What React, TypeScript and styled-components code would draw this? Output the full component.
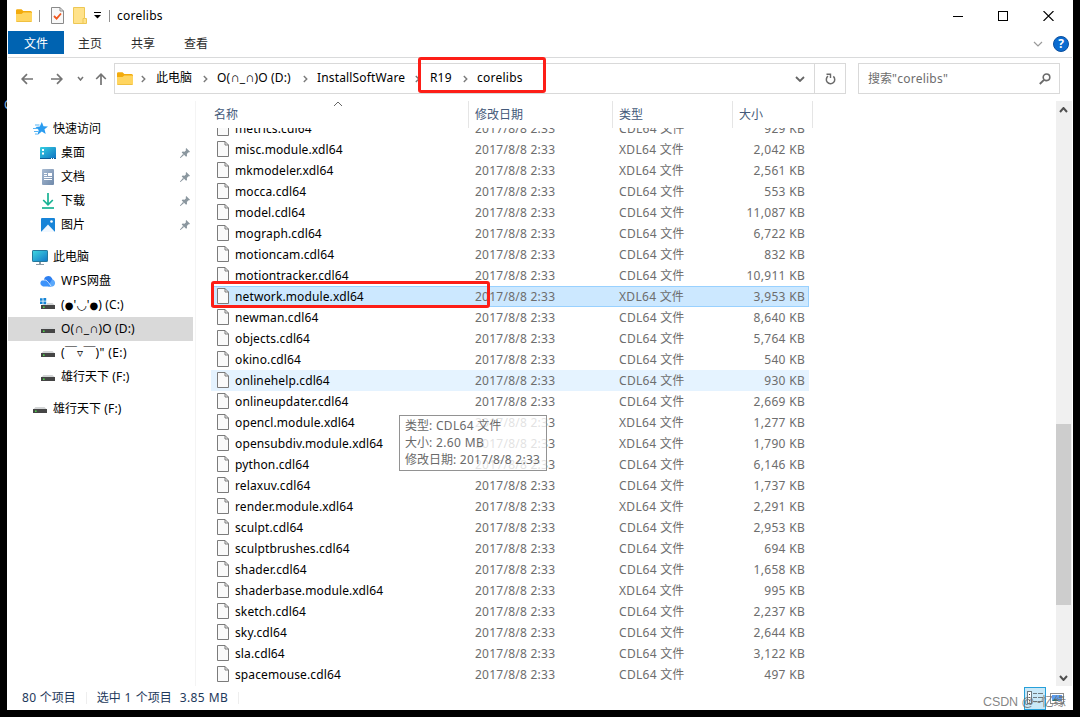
import React from "react";
import styled, { createGlobalStyle } from "styled-components";

const Global = createGlobalStyle`
  * { box-sizing: border-box; }
  html, body { margin: 0; padding: 0; background: #000; overflow: hidden; }
  body { font-family: "Noto Sans", "Noto Sans CJK SC", "DejaVu Sans", sans-serif; font-size: 12px; color: #000; }
  svg { display: block; flex: none; }
`;

/* ---------- text ---------- */
const Run = styled.span<{ $ls: number }>`
  letter-spacing: ${(p) => p.$ls}px;
`;
const Dot = styled.span`
  font-family: "DejaVu Sans", sans-serif;
  font-size: 10px;
  line-height: 1;
`;
const Cap = styled.span`
  font-family: "Liberation Sans", "DejaVu Sans", sans-serif;
  font-size: 13px;
  line-height: 1;
`;
const Line = styled.span`
  white-space: pre;
  line-height: 20px;
`;
const CJK = /([\u3400-\u9fff\uff00-\uffef]+|●|∩)/;

function Label({ text, ls = 0.15 }: { text: string; ls?: number }) {
  return (
    <Line>
      {text.split(CJK).filter(Boolean).map((part, i) => {
        if (part === "●") return <Dot key={i}>{part}</Dot>;
        if (part === "∩") return <Cap key={i}>{part}</Cap>;
        return <Run key={i} $ls={CJK.test(part) ? 0 : ls}>{part}</Run>;
      })}
    </Line>
  );
}

/* ---------- frame ---------- */
const Desktop = styled.div`
  position: relative;
  width: 1080px;
  height: 717px;
  padding: 0 7px 7px;
  background: #000;
  overflow: hidden;
`;
const Window = styled.div`
  display: flex;
  flex-direction: column;
  width: 1066px;
  height: 710px;
  padding: 0 1px;
  background: #fff;
`;
const DesktopGlyph = styled.div`
  position: absolute;
  left: 4px;
  top: 96px;
  width: 3px;
  height: 18px;
  line-height: 18px;
  font-size: 12px;
  overflow: hidden;
  color: #7fb2e0;
`;

/* ---------- title bar ---------- */
const TitleBar = styled.div`
  display: flex;
  align-items: center;
  height: 31px;
  padding-left: 8px;
`;
const Rule = styled.div<{ $l: number; $r: number }>`
  width: 1px;
  height: 12px;
  margin: 0 ${(p) => p.$r}px 0 ${(p) => p.$l}px;
  background: #909090;
`;
const QuickIcons = styled.div`
  display: flex;
  align-items: center;
  gap: 9px;
`;
const WindowButtons = styled.div`
  display: flex;
  gap: 35px;
  margin-left: auto;
  padding-right: 18px;
`;

/* ---------- tabs ---------- */
const Tabs = styled.div`
  display: flex;
  height: 27px;
  padding-bottom: 3px;
  border-bottom: 1px solid #d9dadb;
`;
const Tab = styled.div<{ $active?: boolean; $w: number }>`
  display: flex;
  align-items: center;
  justify-content: center;
  width: ${(p) => p.$w}px;
  height: 23px;
  padding-top: 2px;
  color: ${(p) => (p.$active ? "#fff" : "#2b2b2b")};
  background: ${(p) => (p.$active ? "#0063b1" : "transparent")};
`;
const TabTools = styled.div`
  display: flex;
  align-items: center;
  gap: 10px;
  height: 26px;
  margin-left: auto;
  padding-right: 3px;
`;
const Help = styled.div`
  width: 16px;
  height: 16px;
  border: 1px solid #0b4f9e;
  border-radius: 50%;
  background: #0a6bd0;
  color: #fff;
  font-weight: 700;
  font-size: 12px;
  line-height: 14px;
  text-align: center;
`;

/* ---------- address ---------- */
const AddressRow = styled.div`
  display: flex;
  height: 43px;
  padding: 5px 0 7px;
`;
const NavButtons = styled.div`
  display: flex;
  align-items: center;
  width: 106px;
  padding-left: 13px;
`;
const Gap = styled.div<{ $w: number }>`
  width: ${(p) => p.$w}px;
  flex: none;
`;
const AddressBox = styled.div`
  display: flex;
  align-items: center;
  width: 732px;
  height: 31px;
  border: 1px solid #d9d9d9;
  padding-left: 2px;
`;
const Crumb = styled.div<{ $w: number }>`
  width: ${(p) => p.$w}px;
  display: flex;
  padding-bottom: 2px;
`;
const AddressTail = styled.div`
  display: flex;
  align-items: center;
  height: 100%;
  margin-left: auto;
`;
const Refresh = styled.div`
  display: flex;
  align-items: center;
  justify-content: center;
  width: 31px;
  height: 100%;
  margin-left: 9px;
  border-left: 1px solid #d9d9d9;
`;
const SearchBox = styled.div`
  display: flex;
  align-items: center;
  justify-content: space-between;
  width: 202px;
  height: 31px;
  margin-left: 12px;
  padding: 0 8px 0 9px;
  border: 1px solid #d9d9d9;
  color: #6d6d6d;
`;

/* ---------- body ---------- */
const Body = styled.div`
  display: flex;
  height: 585px;
`;
const Sidebar = styled.div`
  width: 188px;
  padding-top: 16px;
  border-right: 1px solid #f4f4f4;
`;
const SideRow = styled.div<{ $indent: number; $selected?: boolean; $gap?: boolean }>`
  display: flex;
  align-items: center;
  gap: 5px;
  width: 185px;
  height: 24px;
  margin-top: ${(p) => (p.$gap ? 8 : 0)}px;
  padding-left: ${(p) => p.$indent}px;
  padding-right: 3px;
  background: ${(p) => (p.$selected ? "#d9d9d9" : "transparent")};
`;
const PinSlot = styled.div`
  margin-left: auto;
`;
const Pane = styled.div`
  position: relative;
  display: flex;
  flex-direction: column;
  flex: 1;
  padding-left: 15px;
`;
const Header = styled.div`
  display: flex;
  height: 27px;
  color: #44597a;
`;
const HeadCell = styled.div<{ $w: number; $pad: number }>`
  display: flex;
  align-items: flex-start;
  width: ${(p) => p.$w}px;
  padding: 4px 0 0 ${(p) => p.$pad}px;
  border-right: 1px solid #e5e5e5;
`;
const SortMark = styled.div`
  position: absolute;
  left: 137px;
  top: 0;
`;
const List = styled.div`
  display: flex;
  flex-direction: column;
  justify-content: flex-end;
  width: 598px;
  height: 557px;
  overflow: hidden;
`;
const FileRow = styled.div<{ $state?: "selected" | "hover" }>`
  display: flex;
  align-items: center;
  flex: none;
  height: 21px;
  padding: 0 4px 0 6px;
  background: ${(p) => (p.$state === "selected" ? "#cce8ff" : p.$state === "hover" ? "#e5f3ff" : "transparent")};
  box-shadow: ${(p) => (p.$state === "selected" ? "inset 0 0 0 1px #99d1ff" : "none")};
`;
const NameCell = styled.div`
  display: flex;
  align-items: center;
  gap: 6px;
  width: 258px;
  & > svg { margin-bottom: 1px; }
`;
const MetaCell = styled.div<{ $w: number; $right?: boolean }>`
  width: ${(p) => p.$w}px;
  color: #6d6d6d;
  text-align: ${(p) => (p.$right ? "right" : "left")};
  line-height: 20px;
`;
const Scrollbar = styled.div`
  display: flex;
  flex-direction: column;
  align-items: center;
  width: 16px;
  padding: 6px 1px 5px 0;
  background: #f0f0f0;
`;
const Thumb = styled.div`
  width: 15px;
  height: 181px;
  margin: 311px 0 auto;
  background: #cdcdcd;
`;

/* ---------- status ---------- */
const Status = styled.div`
  display: flex;
  align-items: center;
  height: 24px;
  padding-left: 14px;
  color: #1e395b;
`;
const StatusRule = styled.div<{ $l: number; $r: number }>`
  width: 1px;
  height: 12px;
  margin: 0 ${(p) => p.$r}px 0 ${(p) => p.$l}px;
  background: #eee;
`;
const Views = styled.div`
  display: flex;
  align-items: center;
  gap: 4px;
  margin-left: auto;
  padding-right: 8px;
`;
const ViewActive = styled.div`
  display: flex;
  align-items: center;
  justify-content: center;
  width: 22px;
  height: 23px;
  border: 1px solid #26a0da;
  background: #c9e8f7;
`;

/* ---------- overlays ---------- */
const RedMark = styled.div<{ $x: number; $y: number; $w: number; $h: number }>`
  position: absolute;
  left: ${(p) => p.$x}px;
  top: ${(p) => p.$y}px;
  width: ${(p) => p.$w}px;
  height: ${(p) => p.$h}px;
  border: 3px solid #fd1e17;
  border-radius: 3px;
`;
const Tooltip = styled.div`
  position: absolute;
  left: 399px;
  top: 415px;
  width: 148px;
  height: 56px;
  padding: 1px 0 0 5px;
  display: flex;
  flex-direction: column;
  border: 1px solid #929292;
  background: rgba(255, 255, 255, 0.8);
  color: #6a6a6a;
`;
const TipLine = styled.div`
  height: 17px;
  display: flex;
  align-items: center;
`;
const Watermark = styled.div`
  position: absolute;
  left: 983px;
  top: 692px;
  color: rgba(110, 110, 110, 0.85);
  font-family: "Liberation Sans", "Noto Sans CJK SC", sans-serif;
  font-size: 12.5px;
  letter-spacing: -0.1px;
  line-height: 20px;
  white-space: pre;
`;

/* ---------- icons ---------- */
const Folder = () => (
  <svg width="16" height="14" viewBox="0 0 16 14">
    <path d="M0 1.500Q0 .2 1.300.2h4.200L7.300 2h7.200q1.500 0 1.500 1.500V6H0z" fill="#f3ab0c" />
    <path d="M0 5h5.500L7.300 3.500H15q1 0 1 1v7.300q0 1.200-1.200 1.200H1.200Q0 13 0 11.800z" fill="#ffd560" />
    <path d="M0.500 12.500h15" stroke="#f0c040" strokeWidth="1" />
  </svg>
);
const CheckDoc = () => (
  <svg width="13" height="17" viewBox="0 0 13 17">
    <path d="M.5.500h8.500l3.500 3.500v12.500H.5z" fill="#f8f8f8" stroke="#8a8a8a" />
    <path d="M9 .5v3.500h3.500" fill="none" stroke="#8a8a8a" />
    <path d="M3 9l2.600 2.600L10 6.500" fill="none" stroke="#f0561d" strokeWidth="1.800" />
  </svg>
);
const NewFolder = () => (
  <svg width="14" height="17" viewBox="0 0 14 17">
    <path d="M.5.500h11v11h2v5H.5z" fill="#ffe28a" stroke="#edc754" />
    <path d="M11.500 11.500h-1.500v5" fill="none" stroke="#edc754" />
  </svg>
);
const QuickMenu = () => (
  <svg width="7" height="7" viewBox="0 0 7 7">
    <path d="M0 .5h7" stroke="#000" />
    <path d="M0 3h7L3.500 6.500z" fill="#000" />
  </svg>
);
const Min = () => (
  <svg width="10" height="10"><path d="M0 5.500h10" stroke="#000" /></svg>
);
const Max = () => (
  <svg width="10" height="10"><rect x=".5" y=".5" width="9" height="9" fill="none" stroke="#000" /></svg>
);
const Close = () => (
  <svg width="11" height="10"><path d="M.5 0l10 10M10.500 0l-10 10" stroke="#000" strokeWidth="1.100" /></svg>
);
type ChevronProps = { w: number; h: number; color: string; sw?: number; up?: boolean };
const Chevron = ({ w, h, color, sw = 1.500, up }: ChevronProps) => (
  <svg width={w + 2} height={h + 2} viewBox={`-1 -1 ${w + 2} ${h + 2}`}>
    <path d={up ? `M0 ${h}L${w / 2} 0L${w} ${h}` : `M0 0L${w / 2} ${h}L${w} 0`} fill="none" stroke={color} strokeWidth={sw} />
  </svg>
);
const CrumbArrow = () => (
  <svg width="5" height="8" viewBox="0 0 5 8"><path d="M.8 1l3 3-3 3" fill="none" stroke="#7a7a7a" strokeWidth="1.400" /></svg>
);
const Arrow = ({ turn, color = "#747474" }: { turn: number; color?: string }) => (
  <svg width="12" height="12" viewBox="0 0 12 12">
    <g transform={`rotate(${turn} 6 6)`} fill="none" stroke={color} strokeWidth="1.700">
      <path d="M1 6h11M6 1.200L1.200 6 6 10.800" />
    </g>
  </svg>
);
const RefreshIcon = () => (
  <svg width="11" height="12" viewBox="0 0 11 12">
    <path d="M3 3.200A4.200 4.200 0 1 0 8.300 3.400" fill="none" stroke="#6a6a6a" strokeWidth="1.500" />
    <path d="M1.500 1.200H5.500V5" fill="none" stroke="#6a6a6a" strokeWidth="1.400" />
  </svg>
);
const SearchIcon = () => (
  <svg width="12" height="12" viewBox="0 0 12 12" fill="none" stroke="#6a6a6a">
    <circle cx="7.500" cy="4.300" r="3.300" strokeWidth="1.600" />
    <path d="M5 6.800L.8 11" strokeWidth="1.900" />
  </svg>
);
const Star = () => (
  <svg width="15" height="14" viewBox="0 0 15 14">
    <path d="M8.800 0l1.700 4.200 4.500.2-3.500 2.900 1.200 4.700-3.900-2.400L4.500 13l1.200-5L2.500 5l4.300-.6z" fill="#2a9cf0" />
    <path d="M2 3h4.500M0 6.500h4M1 9.500h4M2 12h2.500" stroke="#55b4f5" strokeWidth="1" />
  </svg>
);
const DesktopIcon = () => (
  <svg width="16" height="12" viewBox="0 0 16 12">
    <defs><linearGradient id="dk" x1="0" y1="0" x2="1" y2="1"><stop offset="0" stopColor="#35d0e2" /><stop offset="1" stopColor="#0f70c0" /></linearGradient></defs>
    <rect width="16" height="12" rx="1" fill="url(#dk)" />
    <path d="M2 2h2v2H2zM2 5.500h2v2H2z" fill="#fff" />
    <path d="M0 11.500h16" stroke="#0c5a94" strokeWidth="1" />
    <path d="M11 11.500h1M13 11.500h1" stroke="#fff" />
  </svg>
);
const DocIcon = () => (
  <svg width="12" height="16" viewBox="0 0 12 16">
    <defs><linearGradient id="dc" x1="0" y1="0" x2="1" y2="1"><stop offset="0" stopColor="#a9bbd2" /><stop offset="1" stopColor="#6f89aa" /></linearGradient></defs>
    <rect width="12" height="16" rx="1" fill="url(#dc)" />
    <path d="M2 4.500h3M2 6.500h3M2 8.500h8M2 10.500h8" stroke="#fff" />
    <rect x="6" y="4" width="4" height="3" fill="#fff" />
  </svg>
);
const DownloadIcon = () => (
  <svg width="12" height="16" viewBox="0 0 12 16" fill="none" stroke="#18b293">
    <path d="M6 0v12M1.200 7L6 11.800 10.800 7" strokeWidth="1.700" />
    <path d="M0 15h12" strokeWidth="1.700" />
  </svg>
);
const PictureIcon = () => (
  <svg width="14" height="14" viewBox="0 0 14 14">
    <rect width="14" height="14" rx="1" fill="#1784d8" />
    <path d="M0 14L7 6.500l7 7.500z" fill="#f1f8ff" />
    <circle cx="10.500" cy="3.500" r="1.300" fill="#fff" />
  </svg>
);
const PcIcon = () => (
  <svg width="16" height="15" viewBox="0 0 16 15">
    <defs><linearGradient id="pc" x1="0" y1="0" x2="1" y2="1"><stop offset="0" stopColor="#3fd8e0" /><stop offset="1" stopColor="#1276c8" /></linearGradient></defs>
    <rect x=".5" y=".5" width="15" height="11" rx=".6" fill="url(#pc)" stroke="#26789c" />
    <path d="M7 12h2v2H7z" fill="#8a9aa6" /><path d="M4 14.500h8" stroke="#8a9aa6" />
  </svg>
);
const CloudIcon = () => (
  <svg width="16" height="12" viewBox="0 0 16 12">
    <path d="M4 5.500a4.300 4.300 0 0 1 8-2.300L13.500 7 9 11z" fill="#2d7ff0" />
    <path d="M12 4.500a3.600 3.600 0 0 1 .5 7H8z" fill="#5aa8fb" />
    <path d="M3 5.200q3-.8 5 2l3.500 4.300H3a3.200 3.200 0 0 1 0-6.300z" fill="#3d93fa" />
    <path d="M2.500 5q4-1 6 2.500l2.500 3.500" stroke="#e5f1ff" fill="none" strokeWidth=".8" />
  </svg>
);
const DriveIcon = ({ system }: { system?: boolean }) => (
  <svg width="16" height="14" viewBox="0 0 16 14">
    <path d="M3.500 5h9L15 7.500H1z" fill="#d3d5d6" />
    <rect x="1" y="7" width="14" height="4" fill="#454545" />
    <rect x="3" y="8.500" width="1.600" height="1.400" fill="#4ee04a" />
    {system && (
      <>
        <path d="M0 0h7v6.500H0z" fill="#fff" />
        <path d="M0 .3h2.600v2.400H0zM3.400 0h2.800v2.700H3.400zM0 3.500h2.600V6H0zM3.400 3.500h2.800v2.800H3.400z" fill="#1685d6" />
      </>
    )}
  </svg>
);
const Pin = () => (
  <svg width="10" height="10" viewBox="0 0 10 10">
    <path d="M6.200 0L10 3.800l-1 .6-.6-.1-1.500 1.600.1 2-.9.900L1.700 4.400l.9-.8 2 .1L6 2.200 5.700 1zM3 6l1 1-3.500 3H0v-.5z" fill="#8b979f" />
  </svg>
);
const FileIcon = () => (
  <svg width="12" height="16" viewBox="0 0 12 16">
    <path d="M.5.500h7.500l3.500 3.500v11.500H.5z" fill="#fafafa" stroke="#7b7b7b" />
    <path d="M8 .5V4h3.500" fill="none" stroke="#7b7b7b" />
  </svg>
);
const DetailsIcon = () => (
  <svg width="16" height="14" viewBox="0 0 16 14" fill="none" stroke="#6f7a80">
    <rect x=".5" y=".5" width="4" height="12" fill="#fff" />
    <path d="M2 3.500h1M2 6.500h1M2 9.500h1" stroke="#444" />
    <path d="M6 2.500h4M11 2.500h5M6 6.500h4M11 6.500h5M6 10.500h4M11 10.500h5" />
  </svg>
);
const LargeIcon = () => (
  <svg width="14" height="11" viewBox="0 0 14 11">
    <rect x=".5" y=".5" width="13" height="10" fill="#fff" stroke="#8c8c8c" />
    <rect x="2" y="2" width="10" height="6" fill="#5b9df0" />
    <path d="M2 8l3-2.500L9 8z" fill="#2c6e5f" />
  </svg>
);

/* ---------- data ---------- */
type Side = { label: string; icon: React.ReactNode; indent: number; ls?: number; pinned?: boolean; selected?: boolean; gap?: boolean };
const side: Side[] = [
  { label: "快速访问", icon: <Star />, indent: 24 },
  { label: "桌面", icon: <DesktopIcon />, indent: 32, pinned: true },
  { label: "文档", icon: <DocIcon />, indent: 32, pinned: true },
  { label: "下载", icon: <DownloadIcon />, indent: 32, pinned: true },
  { label: "图片", icon: <PictureIcon />, indent: 32, pinned: true },
  { label: "此电脑", icon: <PcIcon />, indent: 24, gap: true },
  { label: "WPS网盘", icon: <CloudIcon />, indent: 32, ls: 0.3 },
  { label: "(●'◡'●) (C:)", icon: <DriveIcon system />, indent: 32, ls: 0.1 },
  { label: "O(∩_∩)O (D:)", icon: <DriveIcon />, indent: 32, ls: 0.15, selected: true },
  { label: "(￣▿￣)\" (E:)", icon: <DriveIcon />, indent: 32, ls: 0.4 },
  { label: "雄行天下 (F:)", icon: <DriveIcon />, indent: 32 },
  { label: "雄行天下 (F:)", icon: <DriveIcon />, indent: 24, gap: true },
];
const IconSlot = styled.div`
  display: flex;
  justify-content: center;
  width: 16px;
`;

const files: [string, string][] = [
  ["metrics.cdl64", "929"],
  ["misc.module.xdl64", "2,042"],
  ["mkmodeler.xdl64", "2,561"],
  ["mocca.cdl64", "553"],
  ["model.cdl64", "11,087"],
  ["mograph.cdl64", "6,722"],
  ["motioncam.cdl64", "832"],
  ["motiontracker.cdl64", "10,911"],
  ["network.module.xdl64", "3,953"],
  ["newman.cdl64", "8,640"],
  ["objects.cdl64", "5,764"],
  ["okino.cdl64", "540"],
  ["onlinehelp.cdl64", "930"],
  ["onlineupdater.cdl64", "2,669"],
  ["opencl.module.xdl64", "1,277"],
  ["opensubdiv.module.xdl64", "1,790"],
  ["python.cdl64", "6,146"],
  ["relaxuv.cdl64", "1,737"],
  ["render.module.xdl64", "2,291"],
  ["sculpt.cdl64", "2,953"],
  ["sculptbrushes.cdl64", "694"],
  ["shader.cdl64", "1,658"],
  ["shaderbase.module.xdl64", "995"],
  ["sketch.cdl64", "2,237"],
  ["sky.cdl64", "2,644"],
  ["sla.cdl64", "3,122"],
  ["spacemouse.cdl64", "497"],
];
const rowState = (name: string) =>
  name.startsWith("network") ? "selected" : name.startsWith("onlinehelp") ? "hover" : undefined;

export default function App() {
  return (
    <Desktop>
      <Global />
      <DesktopGlyph>C</DesktopGlyph>
      <Window>
        <TitleBar>
          <Folder />
          <Rule $l={7} $r={11} />
          <QuickIcons><CheckDoc /><NewFolder /></QuickIcons>
          <Gap $w={7} />
          <QuickMenu />
          <Rule $l={8} $r={7} />
          <Label text="corelibs" ls={0.25} />
          <WindowButtons><Min /><Max /><Close /></WindowButtons>
        </TitleBar>
        <Tabs>
          <Tab $active $w={56}><Label text="文件" /></Tab>
          <Tab $w={52}><Label text="主页" /></Tab>
          <Tab $w={54}><Label text="共享" /></Tab>
          <Tab $w={52}><Label text="查看" /></Tab>
          <TabTools>
            <Chevron w={8} h={4} color="#9a9a9a" sw={1.200} />
            <Help>?</Help>
          </TabTools>
        </Tabs>
        <AddressRow>
          <NavButtons>
            <Arrow turn={0} /><Gap $w={18} />
            <Arrow turn={180} /><Gap $w={14} />
            <Chevron w={5} h={3} color="#747474" /><Gap $w={11} />
            <Arrow turn={90} />
          </NavButtons>
          <AddressBox>
            <Folder /><Gap $w={8} /><CrumbArrow /><Gap $w={10} />
            <Crumb $w={47}><Label text="此电脑" /></Crumb><CrumbArrow /><Gap $w={9} />
            <Crumb $w={86}><Label text="O(∩_∩)O (D:)" ls={0.15} /></Crumb><CrumbArrow /><Gap $w={9} />
            <Crumb $w={98}><Label text="InstallSoftWare" ls={0.15} /></Crumb><CrumbArrow /><Gap $w={10} />
            <Crumb $w={33}><Label text="R19" /></Crumb><CrumbArrow /><Gap $w={9} />
            <Crumb $w={60}><Label text="corelibs" ls={0.25} /></Crumb>
            <AddressTail>
              <Chevron w={8} h={4} color="#666" sw={1.800} />
              <Refresh><RefreshIcon /></Refresh>
            </AddressTail>
          </AddressBox>
          <SearchBox><Label text={'搜索"corelibs"'} ls={0.25} /><SearchIcon /></SearchBox>
        </AddressRow>
        <Body>
          <Sidebar>
            {side.map((s, i) => (
              <SideRow key={i} $indent={s.indent} $selected={s.selected} $gap={s.gap}>
                <IconSlot>{s.icon}</IconSlot>
                <Label text={s.label} ls={s.ls} />
                {s.pinned && <PinSlot><Pin /></PinSlot>}
              </SideRow>
            ))}
          </Sidebar>
          <Pane>
            <SortMark><Chevron w={8} h={4} color="#666" sw={1} up /></SortMark>
            <Header>
              <HeadCell $w={258} $pad={3}><Label text="名称" /></HeadCell>
              <HeadCell $w={144} $pad={6}><Label text="修改日期" /></HeadCell>
              <HeadCell $w={120} $pad={6}><Label text="类型" /></HeadCell>
              <HeadCell $w={80} $pad={6}><Label text="大小" /></HeadCell>
            </Header>
            <List>
              {files.map(([name, size]) => (
                <FileRow key={name} $state={rowState(name)}>
                  <NameCell><FileIcon /><Label text={name} ls={0.12} /></NameCell>
                  <MetaCell $w={144}><Label text="2017/8/8 2:33" ls={0.25} /></MetaCell>
                  <MetaCell $w={100}><Label text={`${name.includes(".xdl") ? "XDL64" : "CDL64"} 文件`} ls={0.3} /></MetaCell>
                  <MetaCell $w={86} $right><Label text={`${size} KB`} ls={0.3} /></MetaCell>
                </FileRow>
              ))}
            </List>
          </Pane>
          <Scrollbar>
            <Chevron w={7} h={4} color="#505050" sw={2} up />
            <Thumb />
            <Chevron w={7} h={4} color="#505050" sw={2} />
          </Scrollbar>
        </Body>
        <Status>
          <Label text="80 个项目" ls={0.3} />
          <StatusRule $l={10} $r={10} />
          <Label text="选中 1 个项目" ls={0.6} />
          <Gap $w={8} />
          <Label text="3.85 MB" ls={0.4} />
          <StatusRule $l={10} $r={0} />
          <Views>
            <ViewActive><DetailsIcon /></ViewActive>
            <LargeIcon />
          </Views>
        </Status>
      </Window>
      <Tooltip>
        <TipLine><Label text="类型: CDL64 文件" ls={0.3} /></TipLine>
        <TipLine><Label text="大小: 2.60 MB" ls={0.35} /></TipLine>
        <TipLine><Label text="修改日期: 2017/8/8 2:33" ls={0.25} /></TipLine>
      </Tooltip>
      <RedMark $x={418} $y={57} $w={128} $h={36} />
      <RedMark $x={211} $y={281} $w={279} $h={27} />
      <Watermark>CSDN @~忆缘</Watermark>
    </Desktop>
  );
}
